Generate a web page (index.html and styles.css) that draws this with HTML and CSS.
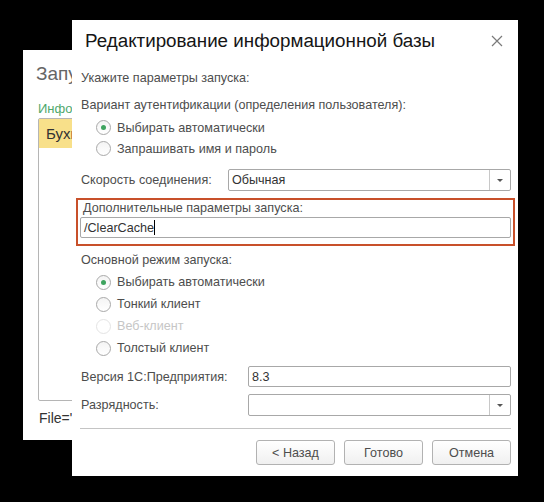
FILE: index.html
```html
<!DOCTYPE html>
<html lang="ru">
<head>
<meta charset="utf-8">
<title>Редактирование информационной базы</title>
<link rel="stylesheet" href="styles.css">
</head>
<body>
<div class="desktop">
  <div class="back-window">
    <div class="back-title">Запуск</div>
    <div class="back-label">Информ</div>
    <div class="back-list">
      <div class="back-item">Бухг</div>
    </div>
    <div class="back-path">File="</div>
  </div>

  <div class="dialog">
    <div class="dlg-header">
      <div class="dlg-title">Редактирование информационной базы</div>
      <svg class="close" width="12" height="12" viewBox="0 0 12 12"><path d="M1 1 L11 11 M11 1 L1 11" stroke="#7a7a7a" stroke-width="1.2" fill="none"/></svg>
    </div>
    <div class="dlg-body">
      <div class="line l-hint">Укажите параметры запуска:</div>
      <div class="line l-auth">Вариант аутентификации (определения пользователя):</div>
      <div class="radio-row r-first"><span class="radio checked"></span><span>Выбирать автоматически</span></div>
      <div class="radio-row"><span class="radio"></span><span>Запрашивать имя и пароль</span></div>

      <div class="field-row r-speed">
        <div class="field-label w-speed">Скорость соединения:</div>
        <div class="select"><span class="select-val">Обычная</span><span class="select-btn"><span class="tri"></span></span></div>
      </div>

      <div class="highlight">
        <div class="hl-label">Дополнительные параметры запуска:</div>
        <div class="input hl-input"><span class="input-val">/ClearCache</span><span class="caret"></span></div>
      </div>

      <div class="line l-mode">Основной режим запуска:</div>
      <div class="radio-row r-mode"><span class="radio checked"></span><span>Выбирать автоматически</span></div>
      <div class="radio-row r-mode"><span class="radio"></span><span>Тонкий клиент</span></div>
      <div class="radio-row r-mode disabled"><span class="radio"></span><span>Веб-клиент</span></div>
      <div class="radio-row r-mode"><span class="radio"></span><span>Толстый клиент</span></div>

      <div class="field-row r-ver">
        <div class="field-label w-ver">Версия 1С:Предприятия:</div>
        <div class="input"><span class="input-val">8.3</span></div>
      </div>
      <div class="field-row r-bit">
        <div class="field-label w-ver">Разрядность:</div>
        <div class="select"><span class="select-val"></span><span class="select-btn"><span class="tri"></span></span></div>
      </div>

      <div class="separator"></div>

      <div class="buttons">
        <div class="btn">&lt; Назад</div>
        <div class="btn">Готово</div>
        <div class="btn">Отмена</div>
      </div>
    </div>
  </div>
</div>
</body>
</html>
```
FILE: styles.css
```css
* { box-sizing: border-box; }
html, body { margin: 0; padding: 0; }
body {
  background: #000;
  font-family: "Liberation Sans", Arial, sans-serif;
  width: 544px;
  height: 502px;
  overflow: hidden;
}
.desktop {
  position: relative;
  width: 544px;
  height: 502px;
}

/* background window (mostly hidden behind the dialog) */
.back-window {
  position: absolute;
  left: 23px;
  top: 50px;
  width: 49px;
  height: 390px;
  background: #fff;
  padding: 13px 0 0 13px;
  display: flex;
  flex-direction: column;
  overflow: hidden;
}
.back-title {
  font-size: 19px;
  line-height: 22px;
  color: #666;
  white-space: nowrap;
}
.back-label {
  margin-top: 16px;
  font-size: 13px;
  line-height: 16px;
  color: #4fa86c;
  white-space: nowrap;
  margin-left: 2px;
}
.back-list {
  margin-top: 1px;
  margin-left: 2px;
  width: 180px;
  height: 283px;
  flex: none;
  border: 1px solid #b5b5b5;
  border-radius: 2px;
}
.back-item {
  height: 29px;
  background: #f8e08a;
  font-size: 15px;
  line-height: 29px;
  padding-left: 7px;
  color: #333;
  white-space: nowrap;
}
.back-path {
  margin-top: 9px;
  margin-left: 3px;
  font-size: 14px;
  color: #333;
  white-space: nowrap;
}

/* main dialog */
.dialog {
  position: absolute;
  left: 72px;
  top: 20px;
  width: 446px;
  height: 456px;
  background: #fff;
  display: flex;
  flex-direction: column;
}
.dlg-header {
  height: 42px;
  display: flex;
  align-items: center;
  justify-content: space-between;
  padding: 0 15px 0 13px;
}
.dlg-title {
  font-size: 18.8px;
  color: #151515;
  white-space: nowrap;
}
.close { display: block; }

.dlg-body {
  display: flex;
  flex-direction: column;
  padding: 0 7px 0 9px;
  font-size: 12.6px;
  color: #4d4d4d;
}
.line {
  height: 22px;
  line-height: 22px;
  white-space: nowrap;
}
.l-hint { margin-top: 5px; }
.l-auth { margin-top: 5px; }
.l-mode { margin-top: 3px; }

.radio-row {
  height: 21px;
  display: flex;
  align-items: center;
  gap: 6px;
  padding-left: 15px;
  white-space: nowrap;
}
.r-first { margin-top: 1px; }
.r-mode { height: 22px; }
.radio {
  width: 15px;
  height: 15px;
  border-radius: 50%;
  border: 1px solid #a9a9a9;
  background: linear-gradient(#f4f4f4, #fff);
  display: flex;
  align-items: center;
  justify-content: center;
  flex: none;
}
.radio.checked::after {
  content: "";
  width: 5px;
  height: 5px;
  border-radius: 50%;
  background: #3fa45f;
}
.radio-row.disabled { color: #c6c6c6; }
.radio-row.disabled .radio { border-color: #e4e4e4; background: #fff; }

.field-row {
  display: flex;
  align-items: center;
}
.r-speed { margin-top: 10px; height: 22px; }
.r-ver { margin-top: 7px; height: 21px; }
.r-bit { margin-top: 7px; height: 22px; }
.field-label { white-space: nowrap; flex: none; }
.w-speed { width: 147px; }
.w-ver { width: 167px; }

.select, .input {
  flex: 1;
  height: 100%;
  border: 1px solid #a8a8a8;
  border-radius: 2px;
  background: #fff;
  display: flex;
  align-items: center;
  color: #333;
}
.select-val, .input-val {
  flex: 1;
  padding-left: 3px;
  white-space: nowrap;
}
.select-btn {
  width: 21px;
  height: 100%;
  border-left: 1px solid #c8c8c8;
  display: flex;
  align-items: center;
  justify-content: center;
}
.tri {
  width: 0;
  height: 0;
  border-left: 3px solid transparent;
  border-right: 3px solid transparent;
  border-top: 3px solid #555;
}

.highlight {
  margin-top: 7px;
  margin-left: -5px;
  margin-right: -4px;
  height: 48px;
  border: 2px solid #c8502a;
  padding: 0 2px 0 2px;
  display: flex;
  flex-direction: column;
}
.hl-label {
  height: 17px;
  line-height: 17px;
  padding-left: 3px;
  white-space: nowrap;
}
.hl-input {
  flex: none;
  height: 21px;
  margin-top: 0;
}
.hl-input .input-val { flex: none; }
.caret {
  width: 1px;
  height: 15px;
  background: #000;
}

.separator {
  margin-top: 12px;
  height: 1px;
  background: #c4c4c4;
  margin-left: -1px;
}

.buttons {
  margin-top: 11px;
  display: flex;
  justify-content: flex-end;
  gap: 9px;
}
.btn {
  width: 79px;
  height: 25px;
  border: 1px solid #b2b2b2;
  border-radius: 3px;
  background: linear-gradient(#fff, #f0f0f0);
  display: flex;
  align-items: center;
  justify-content: center;
  font-size: 12.6px;
  color: #4d4d4d;
}
```
